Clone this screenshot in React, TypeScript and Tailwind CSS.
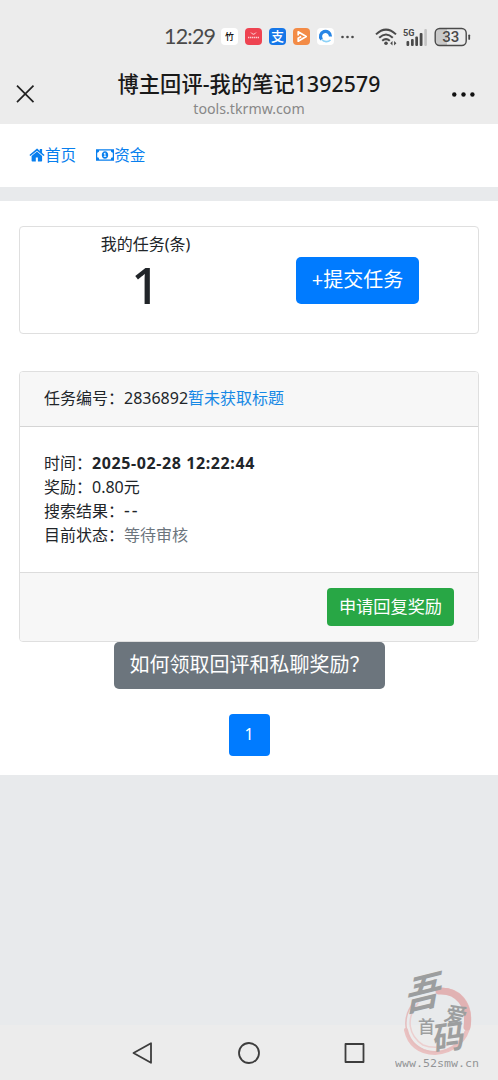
import type { ReactNode } from 'react';

const details = [
  { label: '时间：', value: '2025-02-28 12:22:44', style: 'font-bold tracking-[0.6px]' },
  { label: '奖励：', value: '0.80元', style: '' },
  { label: '搜索结果：', value: '--', style: "font-['Noto_Sans'] text-[18px] leading-none tracking-[2px]" },
  { label: '目前状态：', value: '等待审核', style: 'text-[#6c757d]' },
];

const AppBadge = ({ className, children }: { className: string; children: ReactNode }) => (
  <div className={`flex h-[17px] w-[17px] items-center justify-center overflow-hidden rounded ${className}`}>
    {children}
  </div>
);

const StatusBar = () => (
  <div className="flex h-[60px] items-center pl-[164px] pt-[13px] text-[#4a4a4a]">
    <span className="w-[57px] font-[Lato] text-[21.5px] leading-none tracking-[-0.8px]">12:29</span>
    <div className="flex gap-[7px]">
      <AppBadge className="bg-white text-[9px] font-medium leading-none text-black">竹</AppBadge>
      <AppBadge className="bg-[#ee4351]">
        <svg width="17" height="17" fill="none" stroke="#fff">
          <path d="M6 4.5Q8.5 8 11 4.5" strokeWidth=".8" />
          <path d="M3 9.5h11" strokeWidth="1.5" strokeDasharray="1.4 .6" opacity=".75" />
        </svg>
      </AppBadge>
      <AppBadge className="bg-[#1677e8] text-[13px] font-medium leading-none text-white">支</AppBadge>
      <AppBadge className="bg-[#f38b46]">
        <svg width="17" height="17" fill="none" stroke="#fff" strokeLinejoin="round">
          <path d="M5.2 7.5V3.8L13.2 8.5L5.2 13.2V10.2L8.2 8.5" strokeWidth="1.7" />
        </svg>
      </AppBadge>
      <AppBadge className="bg-white">
        <svg width="17" height="17" fill="none">
          <path d="M4.6 11.5A5 5 0 1 1 13.5 8.5" stroke="#2785e5" strokeWidth="3.2" />
          <path d="M4.8 11.5C7 14.3 11 14.3 13.5 12" stroke="#8ed2f7" strokeWidth="1.6" />
        </svg>
      </AppBadge>
    </div>
    <svg className="ml-1.5" width="15" height="4" fill="#4a4a4a">
      <circle cx="2.5" cy="2" r="1.3" /><circle cx="7.5" cy="2" r="1.3" /><circle cx="12.5" cy="2" r="1.3" />
    </svg>
    <svg className="ml-[20px]" width="24" height="20" viewBox="0 0 24 20" fill="none" stroke="#4a4a4a" strokeWidth="2">
      <path d="M1 7.4Q11 -2.2 21 7.4M4.2 10.8Q11 4.2 17.8 10.8M7.2 13.8Q11 10.4 14.8 13.8" />
      <circle cx="11" cy="16.3" r="1.8" fill="#4a4a4a" stroke="none" />
      <path d="M17.5 14l-2.3 2.3 2.3 2.3zM19.1 14l2.3 2.3-2.3 2.3z" fill="#4a4a4a" stroke="none" />
    </svg>
    <svg className="ml-[3px]" width="27" height="20" viewBox="0 0 27 20" fill="#4a4a4a">
      <text x="1" y="8.8" fontSize="9.5" fontWeight="700" fontFamily="Roboto" textLength="11.5" lengthAdjust="spacingAndGlyphs">5G</text>
      <rect x="4.5" y="14" width="2.7" height="5" rx="1" />
      <rect x="9" y="12" width="2.7" height="7" rx="1" />
      <rect x="13.3" y="9.5" width="2.7" height="9.5" rx="1" />
      <rect x="17.7" y="6" width="2.8" height="13" rx="1" />
      <rect x="22.3" y="2" width="2.6" height="17" rx="1" fill="#c4c4c4" />
    </svg>
    <svg className="ml-[5px]" width="37" height="20" viewBox="0 0 37 20">
      <path d="M6 2h7v16H6a4 4 0 0 1-4-4V6a4 4 0 0 1 4-4z" fill="#c9c9c9" />
      <rect x="1.2" y="1.5" width="31" height="17" rx="4.5" fill="none" stroke="#4a4a4a" strokeWidth="1.4" />
      <path d="M35.2 8.3v3.6" stroke="#4a4a4a" strokeWidth="1.8" strokeLinecap="round" />
      <text x="16.8" y="15.2" textAnchor="middle" fontSize="15" fontWeight="500" fontFamily="Roboto" fill="#4a4a4a">33</text>
    </svg>
  </div>
);

const TitleBar = () => (
  <div className="flex h-16 items-start justify-between pl-4 pr-[23px]">
    <svg className="mt-[25px]" width="19" height="18" fill="none" stroke="#222" strokeWidth="1.7">
      <path d="M1 .7L17.5 17.2M17.5 .7L1 17.2" />
    </svg>
    <div className="flex flex-col items-center pl-[11px] pt-2.5">
      <h1 className="whitespace-nowrap text-[21.2px] font-medium leading-7 tracking-[0.12px] text-[#191919]">博主回评-我的笔记1392579</h1>
      <p className="text-[14.2px] leading-[21px] text-[#888]">tools.tkrmw.com</p>
    </div>
    <svg className="mt-8" width="23" height="5" fill="#111">
      <circle cx="2.3" cy="2.5" r="2.2" /><circle cx="11.5" cy="2.5" r="2.2" /><circle cx="20.4" cy="2.5" r="2.2" />
    </svg>
  </div>
);

const HomeIcon = () => (
  <svg width="16" height="14" viewBox="0 0 16 14" fill="#087fee">
    <path d="M8 3.5L2.6 8v4.7c0 .4.3.7.7.7h3.5V9.6h2.1v3.8h3.5c.4 0 .7-.3.7-.7V8z" />
    <path d="M8 .6L.4 7l1 1.1L8 2.7l6.6 5.4 1-1.1L13.1 4.9V1h-2.3v2L8.7 1Q8.3.5 8 .6z" />
  </svg>
);

const MoneyIcon = () => (
  <svg width="18" height="12" viewBox="0 0 18 12" fill="#087fee">
    <path fillRule="evenodd" d="M0 .3h18v11.4H0zM3.2 1.6A2 2 0 0 1 1.2 3.7v4.6a2 2 0 0 1 2 2.1h11.6a2 2 0 0 1 2-2.1V3.7a2 2 0 0 1-2-2.1z" />
    <path fillRule="evenodd" d="M9 2.2c2 0 3.2 1.8 3.2 3.8S11 9.8 9 9.8 5.8 8 5.8 6 7 2.2 9 2.2zM7.6 4.7l.5.7.4-.3V7.3h-.8V8h2.6v-.7h-.8V3.8h-.8z" />
  </svg>
);

// Watermark in the lower right corner
const Watermark = () => (
  <div className="absolute bottom-0 right-0 h-[150px] w-[118px] opacity-60">
    <svg width="118" height="150" viewBox="0 -30 118 150">
      <g fill="none" strokeLinecap="round">
        <path d="M58 30C79 28 91 43 89 63C87 80 73 92 55 93C39 93 29 84 26 70" stroke="#e9a5a5" strokeWidth="4" />
        <path d="M59 31C79 30 90 46 87 67" stroke="#dd8e8e" strokeWidth="7" />
        <path d="M35 41C20 58 24 81 44 90C60 96 80 88 85 72" stroke="#e3a0a0" strokeWidth="1.5" />
        <path d="M38 43C25 59 29 76 43 85C50 88 61 88 68 85" stroke="#edbcbc" strokeWidth="1.5" />
      </g>
      <g fill="#6b6d6c" fontFamily="'Noto Sans CJK SC'" fontWeight="700">
        <text transform="translate(24 52) rotate(-14) skewX(-24) scale(.98 1)" fontSize="38">吾</text>
        <text transform="translate(63 60) rotate(12) skewX(-8)" fontSize="21">爱</text>
        <text x="38" y="73" fontSize="17" fontWeight="500">首</text>
        <text transform="translate(53 91) rotate(-8) skewX(-10)" fontSize="32">码</text>
      </g>
      <text x="15" y="107" fontFamily="'DejaVu Sans Mono'" fontSize="10.5" fill="#585b5e" textLength="84" lengthAdjust="spacingAndGlyphs">www.52smw.cn</text>
    </svg>
  </div>
);

export default function App() {
  return (
    <div lang="zh-CN" className="relative flex h-[1080px] w-[498px] flex-col overflow-hidden bg-[#e8eaec] font-['Noto_Sans','Noto_Sans_CJK_SC',sans-serif] text-base leading-6 text-[#212529]">
      <header className="h-[124px] shrink-0 bg-[#ececec]">
        <StatusBar />
        <TitleBar />
      </header>

      <nav className="flex h-[63px] shrink-0 items-center gap-5 bg-white pl-[29px] pb-0.5 text-[15.6px] text-[#087fee]">
        <a className="flex items-center"><HomeIcon />首页</a>
        <a className="flex items-center"><MoneyIcon />资金</a>
      </nav>

      <main className="mt-3.5 flex h-[574px] shrink-0 flex-col bg-white px-[19px] pt-[25px]">
        {/* Task count */}
        <section className="flex h-[108px] shrink-0 rounded border border-[#dfdfdf]">
          <div className="w-[251px] pt-[5px] text-center">
            <p>我的任务(条)</p>
            <p className="pt-3 font-['Noto_Sans'] text-[50px] font-medium leading-[34px]">1</p>
          </div>
          <div className="flex flex-1 items-start pl-[25px] pt-[30px]">
            <button className="h-[47px] w-[123px] rounded-[5px] bg-[#007bff] pb-0.5 text-xl text-white">+提交任务</button>
          </div>
        </section>

        {/* Task card */}
        <section className="mt-[37px] flex h-[271px] shrink-0 flex-col overflow-hidden rounded border border-[#dfdfdf]">
          <div className="flex h-[55px] items-center border-b border-[#d5d5d5] bg-[#f7f7f7] pb-0.5 pl-6">
            任务编号：2836892<a className="text-[#1688e5]">暂未获取标题</a>
          </div>
          <div className="h-[145px] pl-6 pt-[23.5px]">
            {details.map((item) => (
              <p key={item.label} className="h-6">{item.label}<span className={item.style}>{item.value}</span></p>
            ))}
          </div>
          <div className="flex flex-1 items-start justify-end border-t border-[#dcdcdc] bg-[#f7f7f7] pr-6 pt-[15px]">
            <button className="h-[38px] w-[127px] rounded bg-[#28a745] text-[17.2px] text-white">申请回复奖励</button>
          </div>
        </section>

        <button className="h-[47px] w-[271px] shrink-0 self-center rounded-[5px] bg-[#6c757d] pb-px pl-4 text-left text-xl text-white">如何领取回评和私聊奖励？</button>
        <button className="mt-[25px] h-[42px] w-[41px] shrink-0 self-center rounded bg-[#007bff] pb-0.5 text-white">1</button>
      </main>

      {/* Android navigation */}
      <footer className="mt-auto flex h-[55px] shrink-0 items-center bg-[#ececec] pl-[132px]">
        <svg width="234" height="24" viewBox="0 0 234 24" fill="none" stroke="#3d3d3d" strokeWidth="1.8" strokeLinejoin="round">
          <path d="M19 2.2v19.6L1.5 12z" />
          <circle cx="117" cy="12" r="10" />
          <rect x="213.5" y="3" width="18" height="18" />
        </svg>
      </footer>
      <Watermark />
    </div>
  );
}
